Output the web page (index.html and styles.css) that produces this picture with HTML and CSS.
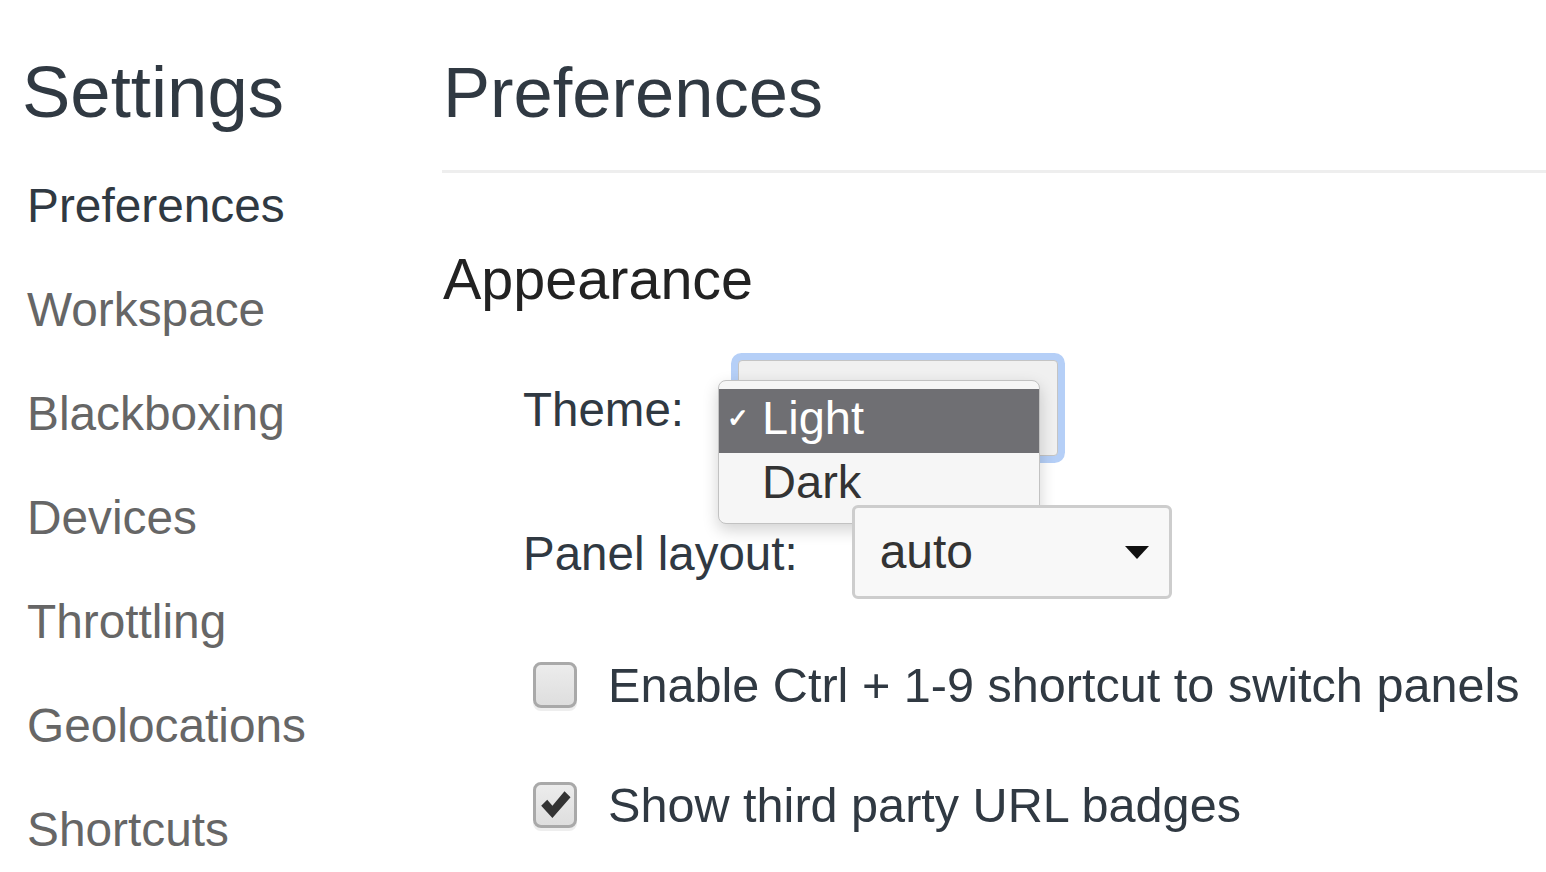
FILE: index.html
```html
<!DOCTYPE html>
<html lang="en">
<head>
<meta charset="utf-8">
<title>Settings</title>
<link rel="stylesheet" href="styles.css">
</head>
<body>
<div class="page">
  <aside class="sidebar">
    <h1 class="sidebar-title">Settings</h1>
    <nav class="nav">
      <div class="nav-item selected">Preferences</div>
      <div class="nav-item">Workspace</div>
      <div class="nav-item">Blackboxing</div>
      <div class="nav-item">Devices</div>
      <div class="nav-item">Throttling</div>
      <div class="nav-item">Geolocations</div>
      <div class="nav-item">Shortcuts</div>
    </nav>
  </aside>
  <main class="main">
    <h1 class="main-title">Preferences</h1>
    <div class="divider"></div>
    <section class="section">
      <h2 class="section-title">Appearance</h2>
      <div class="field-row">
        <span class="field-label">Theme:</span>
        <div class="select-wrap">
          <div class="select focused"><span class="select-value"></span><span class="arrow"></span></div>
          <div class="menu">
            <div class="menu-item active"><span class="check">✓</span>Light</div>
            <div class="menu-item"><span class="check"></span>Dark</div>
          </div>
        </div>
      </div>
      <div class="field-row second">
        <span class="field-label">Panel layout:</span>
        <div class="select-wrap">
          <div class="select"><span class="select-value">auto</span><span class="arrow"></span></div>
        </div>
      </div>
      <div class="check-row first">
        <span class="checkbox"></span>
        <span class="check-label">Enable Ctrl + 1-9 shortcut to switch panels</span>
      </div>
      <div class="check-row">
        <span class="checkbox checked">
          <svg viewBox="0 0 44 46" width="38" height="40"><path d="M6 24 L13 17 L19 24 L33 7 L40 14 L19 38 Z" fill="#333"/></svg>
        </span>
        <span class="check-label">Show third party URL badges</span>
      </div>
    </section>
  </main>
</div>
</body>
</html>
```

FILE: styles.css
```css
* { box-sizing: border-box; }
html, body {
  margin: 0;
  padding: 0;
  background: #fff;
  overflow: hidden;
}
body {
  font-family: "Liberation Sans", Arial, Helvetica, sans-serif;
  color: #303942;
  width: 1546px;
  height: 872px;
}
.page {
  display: flex;
  height: 872px;
}
.sidebar {
  width: 442px;
  flex: none;
  padding-left: 22px;
}
.sidebar-title {
  margin: 52px 0 0 0;
  font-size: 72.5px;
  line-height: 80px;
  font-weight: normal;
  color: #303942;
}
.nav {
  margin-top: 22px;
  padding-left: 5px;
}
.nav-item {
  font-size: 47.8px;
  line-height: 104px;
  height: 104px;
  color: #666;
  white-space: nowrap;
}
.nav-item.selected {
  color: #303942;
}
.main {
  flex: 1;
  min-width: 0;
}
.main-title {
  margin: 53px 0 0 1px;
  font-size: 70.5px;
  line-height: 80px;
  font-weight: normal;
  color: #303942;
}
.divider {
  margin-top: 37px;
  height: 3px;
  background: #eeeeee;
}
.section {
  padding-left: 81px;
}
.section-title {
  margin: 71px 0 0 -80px;
  font-size: 57.5px;
  line-height: 70px;
  font-weight: normal;
  color: #222;
}
.field-row {
  display: flex;
  align-items: center;
  margin-top: 46px;
  height: 96px;
}
.field-row.second {
  margin-top: 49px;
  height: 94px;
}
.field-label {
  font-size: 47.5px;
  line-height: 56px;
  padding-top: 4px;
  margin-right: 54px;
  color: #303942;
  white-space: nowrap;
}
.select-wrap {
  position: relative;
}
.select {
  width: 320px;
  height: 94px;
  border: 3px solid #cdcdcd;
  border-radius: 6px;
  background: #f8f8f8;
  display: flex;
  align-items: center;
  justify-content: space-between;
  padding: 0 20px 0 25px;
}
.select.focused {
  height: 96px;
  border: 1px solid #c4c4c4;
  background: #f0f0f0;
  box-shadow: 0 0 0 7px #b5cff7;
  border-radius: 4px;
}
.select-value {
  font-size: 48px;
  line-height: 88px;
  color: #333;
}
.arrow {
  width: 0;
  height: 0;
  border-left: 12px solid transparent;
  border-right: 12px solid transparent;
  border-top: 13px solid #111;
}
.menu {
  position: absolute;
  left: -20px;
  top: 20px;
  width: 322px;
  height: 144px;
  padding: 8px 0;
  background: #f6f6f6;
  border: 1px solid #c2c2c2;
  border-radius: 8px;
  box-shadow: 0 6px 16px rgba(0, 0, 0, 0.18);
}
.menu-item {
  height: 64px;
  line-height: 58px;
  padding-bottom: 6px;
  font-size: 47px;
  color: #333;
  display: flex;
  align-items: center;
}
.menu-item.active {
  background: #6f6f73;
  color: #fff;
}
.check {
  display: inline-block;
  width: 43px;
  padding-left: 8px;
  font-size: 26px;
  font-weight: bold;
  line-height: 58px;
}
.check-row {
  display: flex;
  align-items: center;
  height: 56px;
  margin-top: 64px;
  padding-left: 10px;
}
.check-row.first {
  margin-top: 58px;
}
.checkbox {
  width: 44px;
  height: 46px;
  flex: none;
  border: 3px solid #a9a9a9;
  border-radius: 8px;
  background: linear-gradient(#ececec, #dedede);
  box-shadow: 0 3px 0 #eeeeee;
  margin-right: 31px;
  display: flex;
  align-items: center;
  justify-content: center;
}
.check-label {
  font-size: 48.6px;
  line-height: 56px;
  color: #303942;
  white-space: nowrap;
}
```
